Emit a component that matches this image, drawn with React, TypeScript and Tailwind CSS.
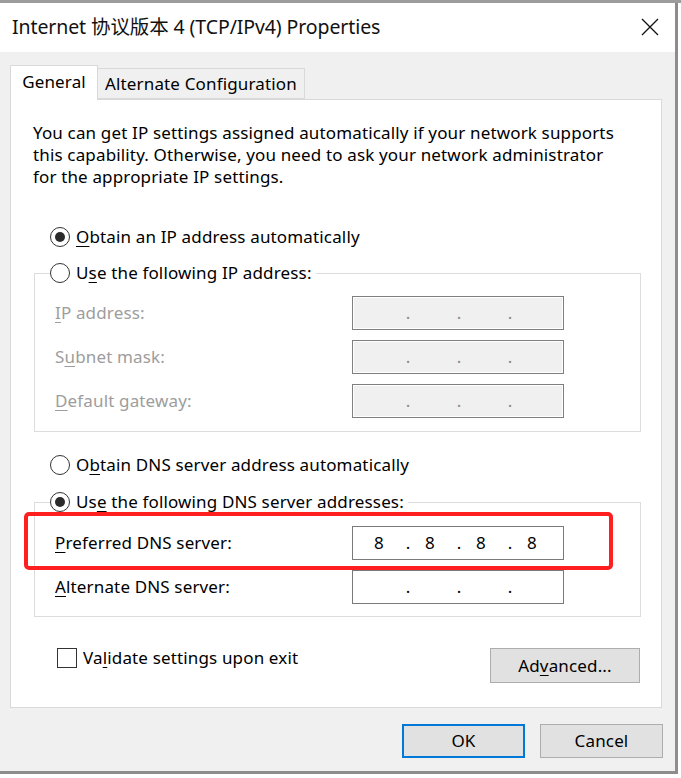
import React from "react";

const ul = "underline decoration-1 underline-offset-[3px]";

function Radio({ checked }: { checked?: boolean }) {
  return (
    <span className="w-[20px] h-[20px] rounded-full border-[1.5px] border-[#333333] bg-white flex items-center justify-center shrink-0">
      {checked && <span className="w-[10px] h-[10px] rounded-full bg-[#2b2b2b]" />}
    </span>
  );
}

function IpBox({ value, disabled }: { value?: string[]; disabled?: boolean }) {
  const parts = value ?? ["", "", "", ""];
  return (
    <div
      className={
        disabled
          ? "w-[212px] h-[34px] shrink-0 flex items-center pl-[21px] bg-[#f0f0f0] border border-[#7f7f7f] shadow-[inset_0_0_0_1px_#ffffff] text-[#8a8a8a]"
          : "w-[212px] h-[34px] shrink-0 flex items-center pl-[21px] bg-white border border-[#7a7a7a] text-black"
      }
    >
      {parts.map((p, i) => (
        <React.Fragment key={i}>
          {i > 0 && <span className="w-[6px] ml-[21px] mr-[14px] text-center">.</span>}
          <span className="w-[10px] text-center">{p}</span>
        </React.Fragment>
      ))}
    </div>
  );
}

function Row({ label, value, disabled }: { label: React.ReactNode; value?: string[]; disabled?: boolean }) {
  return (
    <div className="flex items-center h-[34px]">
      <span className={disabled ? "w-[317px] pl-[20px] text-[#9d9d9d]" : "w-[317px] pl-[20px] text-black"}>{label}</span>
      <IpBox value={value} disabled={disabled} />
    </div>
  );
}

export default function App() {
  return (
    <div className="w-[681px] h-[778px] bg-white overflow-hidden font-['Noto_Sans','Noto_Sans_CJK_SC',sans-serif] text-[17px] tracking-[0.15px] text-black">
      <div className="h-[3px] bg-[#9c9c9c]" />
      <div className="w-[678px] h-[771px] flex flex-col border-r-[3px] border-b-[3px] border-[#8d8d8d]">
        {/* title bar */}
        <div className="h-[49px] bg-white flex items-center justify-between pl-[12px] pr-[16px] shrink-0">
          <span className="text-[19.5px] tracking-[-0.1px] text-[#111] -mt-[2px]">Internet 协议版本 4 (TCP/IPv4) Properties</span>
          <svg width="18" height="18" viewBox="0 0 18 18" className="mb-[2px]">
            <path d="M1 1 L17 17 M17 1 L1 17" stroke="#111" strokeWidth="1.3" />
          </svg>
        </div>

        <div className="flex-1 bg-[#f0f0f0] pl-[10px] pt-[13px]">
          {/* tabs */}
          <div className="flex items-end h-[35px]">
            <div className="relative z-10 w-[88px] h-[35px] bg-white border border-b-0 border-[#d9d9d9] flex justify-center pt-[3px]">
              General
            </div>
            <div className="w-[207px] h-[31px] mb-px border border-l-0 border-[#d9d9d9] bg-[#f0f0f0] flex items-center pl-[7px]">
              Alternate Configuration
            </div>
          </div>

          {/* panel */}
          <div className="relative -mt-px w-[652px] h-[609px] bg-white border border-[#d9d9d9]">
            <p className="mt-[22px] pl-[22px] leading-[22px] whitespace-nowrap">
              You can get IP settings assigned automatically if your network supports
              <br />
              this capability. Otherwise, you need to ask your network administrator
              <br />
              for the appropriate IP settings.
            </p>

            <div className="mt-[37px] pl-[39px] h-[24px] flex items-center gap-[6px]">
              <Radio checked />
              <span>
                <span className={ul}>O</span>btain an IP address automatically
              </span>
            </div>

            <fieldset className="mt-[12px] ml-[23px] w-[607px] border border-[#dcdcdc] pt-[11px] pb-[13px] flex flex-col gap-[10px]">
              <legend className="ml-[15px] pr-[4px] h-[24px] flex items-center gap-[6px]">
                <Radio />
                <span>
                  U<span className={ul}>s</span>e the following IP address:
                </span>
              </legend>
              <Row disabled label={<><span className={ul}>I</span>P address:</>} />
              <Row disabled label={<>S<span className={ul}>u</span>bnet mask:</>} />
              <Row disabled label={<><span className={ul}>D</span>efault gateway:</>} />
            </fieldset>

            <div className="mt-[21px] pl-[39px] h-[24px] flex items-center gap-[6px]">
              <Radio />
              <span>
                O<span className={ul}>b</span>tain DNS server address automatically
              </span>
            </div>

            <fieldset className="mt-[13px] ml-[23px] w-[607px] border border-[#dcdcdc] pt-[12px] pb-[12px] flex flex-col gap-[10px]">
              <legend className="ml-[15px] pr-[4px] h-[24px] flex items-center gap-[6px]">
                <Radio checked />
                <span>
                  Us<span className={ul}>e</span> the following DNS server addresses:
                </span>
              </legend>
              <Row label={<><span className={ul}>P</span>referred DNS server:</>} value={["8", "8", "8", "8"]} />
              <Row label={<><span className={ul}>A</span>lternate DNS server:</>} />
            </fieldset>

            <div className="mt-[30px] flex items-start justify-between pl-[46px] pr-[21px]">
              <div className="flex items-center gap-[6px] h-[21px]">
                <span className="w-[20px] h-[20px] border border-[#333333] bg-white" />
                <span>
                  Va<span className={ul}>l</span>idate settings upon exit
                </span>
              </div>
              <button className="w-[150px] h-[35px] mt-px bg-[#e1e1e1] border border-[#adadad] flex items-center justify-center">
                <span>
                  Ad<span className={ul}>v</span>anced...
                </span>
              </button>
            </div>

            {/* highlight drawn over the preferred DNS row */}
            <div className="absolute left-[13px] top-[412px] w-[589px] h-[58px] border-[4px] border-[#ff1f1f] rounded-[5px] pointer-events-none" />
          </div>

          {/* dialog buttons */}
          <div className="mt-[16px] flex justify-end gap-[15px] pr-[12px]">
            <button className="w-[123px] h-[34px] bg-[#e1e1e1] border-2 border-[#0078d7]">OK</button>
            <button className="w-[123px] h-[34px] bg-[#e1e1e1] border border-[#adadad]">Cancel</button>
          </div>
        </div>
      </div>
    </div>
  );
}
